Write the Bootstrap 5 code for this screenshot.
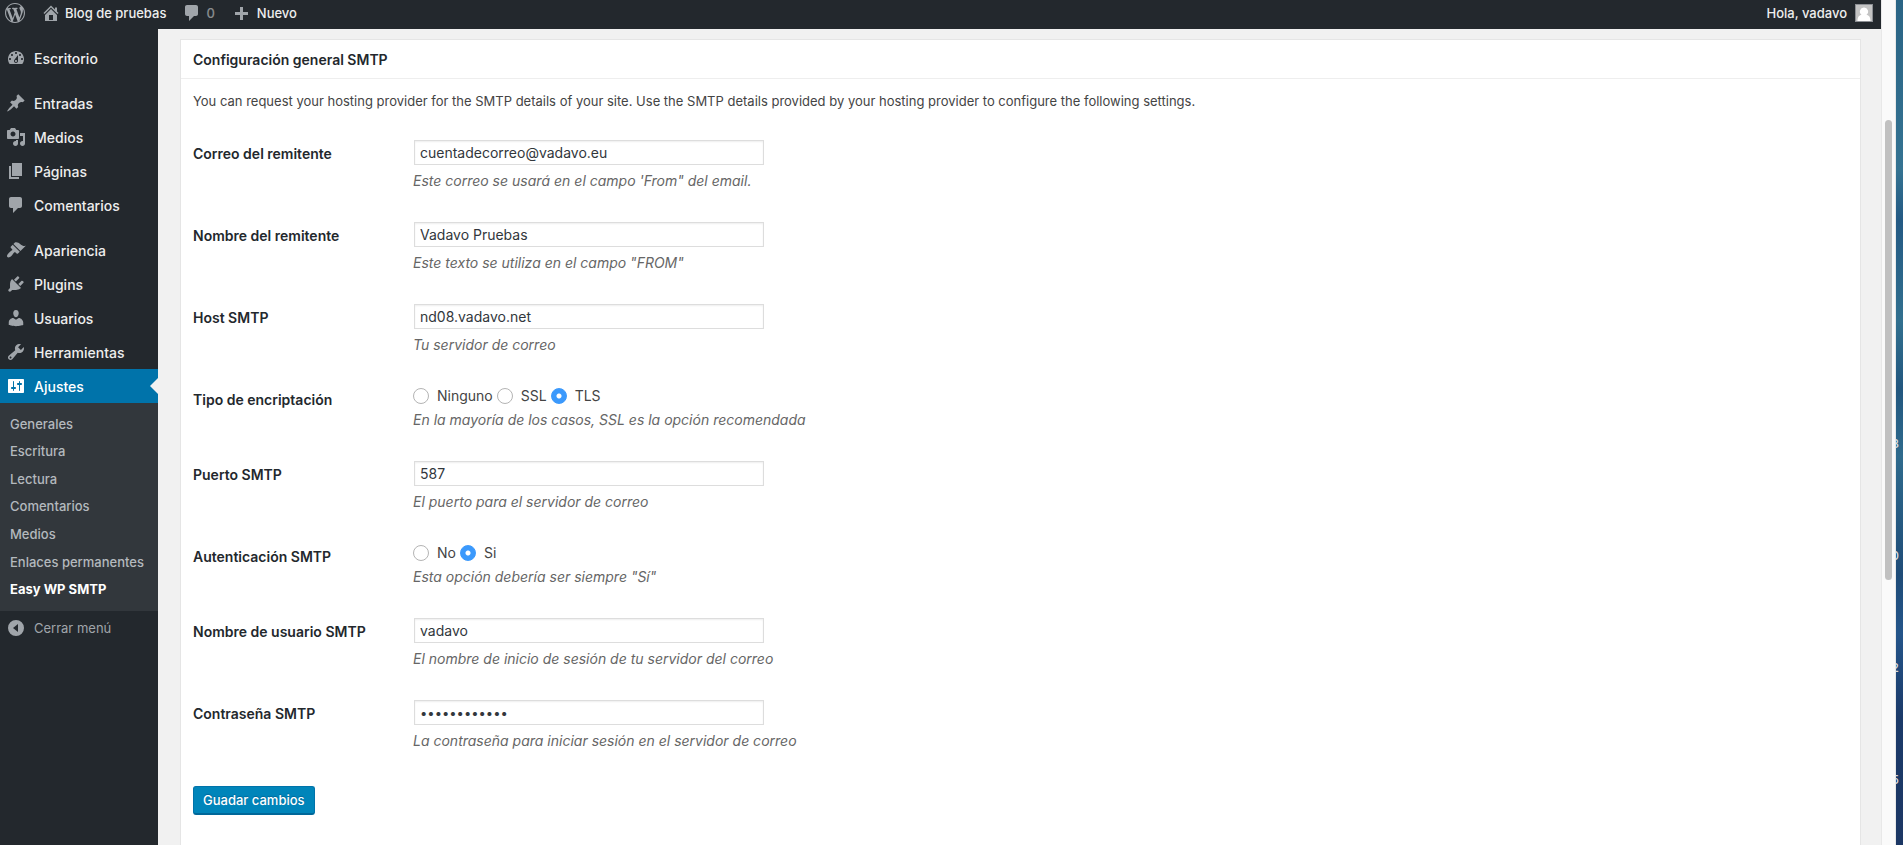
<!DOCTYPE html>
<html lang="es">
<head>
<meta charset="utf-8">
<meta name="viewport" content="width=device-width, initial-scale=1">
<title>Easy WP SMTP ‹ Blog de pruebas — WordPress</title>
<link href="https://cdn.jsdelivr.net/npm/bootstrap@5.3.0/dist/css/bootstrap.min.css" rel="stylesheet">
<style>
  :root { --wp-dark: #23282d; --wp-sub: #32373c; --wp-blue: #0073aa; --wp-grey: #f1f1f1; --wp-icon: #a0a5aa; }
  body { font-family: Inter, "Liberation Sans", sans-serif; font-size: 13px; line-height: 20px; color: #444; background: var(--wp-grey); }
  a { text-decoration: none; }
  .screen { height: 100vh; }
  .dashicon { width: 20px; height: 20px; fill: var(--wp-icon); flex: none; }

  .adminbar { height: 29px; padding: 0 8px 3px 5px; background: var(--wp-dark); font-weight: 500; }
  .adminbar a { color: #eee; }
  .adminbar .new-link { gap: 6px; }
  .avatar { width: 18px; height: 18px; }

  .sidemenu { width: 158px; padding-top: 12px; background: var(--wp-dark); font-size: 14px; font-weight: 500; }
  .menu-row { height: 34px; padding: 2px 0 0 6px; gap: 8px; color: #eee; }
  .menu-row .dashicon { margin-bottom: 2px; }
  .menu-gap { margin-top: 11px; }
  .menu-row.current { background: var(--wp-blue); color: #fff; position: relative; }
  .menu-row.current .dashicon { fill: #fff; }
  .menu-row.current::after { content: ""; position: absolute; right: 0; top: 9px; border: 8px solid transparent; border-right-color: var(--wp-grey); border-left: 0; }
  .submenu { display: grid; grid-auto-rows: 1fr; height: 208px; padding: 7px 10px 8px; background: var(--wp-sub); font-size: 13px; }
  .submenu a { color: #b4b9be; }
  .submenu a.current { color: #fff; font-weight: 700; }
  .menu-row.collapse-row { padding-top: 0; color: #a0a5aa; font-size: 13px; font-weight: 400; }
  .menu-row.collapse-row .dashicon { margin: 0; }

  .workspace { padding: 10px 20px 0 22px; }
  .postbox { background: #fff; border: 1px solid #e5e5e5; border-bottom: 0; }
  .postbox h1 { font-size: 14px; line-height: 20px; font-weight: 600; color: #23282d; padding: 10px 12px 8px; border-bottom: 1px solid #eee; }
  .inside { padding: 12px 12px 0; }
  .intro { margin-bottom: 14px; }
  .field { padding: 15px 0; }
  .field-name { width: 220px; padding-top: 5px; font-size: 14px; line-height: 18px; font-weight: 600; color: #23282d; }
  .field-body { font-size: 14px; }
  .field .form-control { width: 350px; height: 25px; margin-left: 1px; padding: 0 5px; font-size: 14px; line-height: 20px; border: 1px solid #ddd; border-radius: 0; color: #32373c; box-shadow: inset 0 1px 2px rgba(0,0,0,.07); }
  .field .form-control[type="password"] { font-size: 13px; }
  .hint { margin: 5px 0 0; padding-bottom: 1px; line-height: 21px; font-style: italic; color: #666; }
  .choices { gap: 4px; height: 20px; }
  .choices + .hint { margin-top: 3px; }
  .choices label { padding-left: 4px; }
  .choices .form-check-input { width: 16px; height: 16px; margin: 0; border-color: #b4b4b4; }
  .choices .form-check-input:checked { background: radial-gradient(circle, #fff 0 2px, #3b99fc 3px); border-color: #3b99fc; }
  .save { margin-top: 19px; height: 29px; padding: 0 9px; font-size: 13px; font-weight: 500; line-height: 20px; color: #fff; background: #0085ba; border: 1px solid #0073aa; border-bottom: 2px solid #006799; border-radius: 3px; text-shadow: 0 -1px 1px #006799; }

  .scroll-track { width: 15px; background: #fafafa; border: solid #e8e8e8; border-width: 0 1px; padding: 120px 3px 0; }
  .scroll-thumb { height: 460px; border-radius: 4px; background: #c1c1c1; }
  .wallpaper { width: 7px; padding-top: 434px; font-size: 12px; font-weight: 500; color: #ddd; background: linear-gradient(#2a6485, #357392 20%, #245a84 26%, #32708f 38%, #22577f 46%, #2f6b8d 54%, #1f4c78 68%, #24558a 75%, #1b3a69 85%, #1c3764); }
  .wallpaper span { width: 3px; height: 20px; margin-bottom: 92px; }
</style>
</head>
<body>
<div class="screen d-flex overflow-hidden">
  <div class="d-flex flex-column flex-grow-1">
    <header class="adminbar d-flex align-items-center flex-shrink-0">
      <a href="#" class="d-flex" aria-label="WordPress"><svg class="dashicon" viewBox="0 0 20 20"><path d="M20 10c0-5.51-4.49-10-10-10C4.48 0 0 4.49 0 10c0 5.52 4.48 10 10 10 5.51 0 10-4.48 10-10zM7.78 15.37L4.37 6.22c.55-.02 1.17-.08 1.17-.08.5-.06.44-1.13-.06-1.11 0 0-1.45.11-2.37.11-.18 0-.37 0-.58-.01C4.12 2.69 6.87 1.11 10 1.11c2.33 0 4.45.87 6.05 2.34-.68-.11-1.65.39-1.65 1.58 0 .74.45 1.36.9 2.1.35.61.55 1.36.55 2.46 0 1.49-1.4 5-1.4 5l-3.03-8.37c.54-.02.82-.17.82-.17.5-.05.44-1.25-.06-1.22 0 0-1.44.12-2.38.12-.87 0-2.33-.12-2.33-.12-.5-.03-.56 1.2-.06 1.22l.92.08 1.26 3.41zM17.41 10c.24-.64.74-1.87.43-4.25.7 1.29 1.05 2.71 1.05 4.25 0 3.29-1.73 6.24-4.4 7.78.97-2.59 1.94-5.2 2.92-7.78zM6.1 18.09C3.12 16.65 1.11 13.53 1.11 10c0-1.3.23-2.48.72-3.59C3.25 10.3 4.67 14.2 6.1 18.09zm4.03-6.63l2.58 6.98c-.86.29-1.76.45-2.71.45-.79 0-1.57-.11-2.29-.33.81-2.38 1.62-4.74 2.42-7.1z"/></svg></a>
      <a href="#" class="d-flex align-items-center ms-3 gap-1"><svg class="dashicon" viewBox="0 0 20 20"><path d="M16 8.5l1.53 1.53-1.06 1.06L10 4.6l-6.47 6.49-1.06-1.06L10 2.5l4 4v-2h2v4zm-6-2.46l6 5.99V18H4v-5.97zM12 17v-5H8v5h4z"/></svg>Blog de pruebas</a>
      <a href="#" class="d-flex align-items-center ms-3 gap-1"><svg class="dashicon" viewBox="0 0 20 20"><path d="M5 2h9c1.1 0 2 .9 2 2v7c0 1.1-.9 2-2 2h-2l-5 5v-5H5c-1.1 0-2-.9-2-2V4c0-1.1.9-2 2-2z"/></svg><span class="opacity-50">0</span></a>
      <a href="#" class="new-link d-flex align-items-center ms-3"><svg class="dashicon" viewBox="0 0 20 20"><path d="M17 9v3h-5v5H9v-5H4V9h5V4h3v5h5z"/></svg>Nuevo</a>
      <a href="#" class="d-flex align-items-center ms-auto">Hola, vadavo<svg class="avatar ms-2" viewBox="0 0 18 18"><path fill="#8c8f94" d="M0 0h18v18H0z"/><path fill="#c4c4c4" d="M1 1h16v16H1z"/><path fill="#fff" d="M9 3.500a4 4 0 0 1 2.500 7.200c2.500.6 4 2.300 4 6.300h-13c0-4 1.500-5.700 4-6.300A4 4 0 0 1 9 3.500z"/></svg></a>
    </header>
    <div class="d-flex flex-grow-1">
      <nav class="sidemenu flex-shrink-0" aria-label="Menú principal">
        <a href="#" class="menu-row d-flex align-items-center"><svg class="dashicon" viewBox="0 0 20 20"><path d="M3.76 16h12.480c1.100-1.370 1.760-3.110 1.760-5 0-4.420-3.580-8-8-8s-8 3.580-8 8c0 1.890.66 3.630 1.760 5zM10 4c.55 0 1 .45 1 1s-.45 1-1 1-1-.45-1-1 .45-1 1-1zM6 6c.55 0 1 .45 1 1s-.45 1-1 1-1-.45-1-1 .45-1 1-1zm8 0c.55 0 1 .45 1 1s-.45 1-1 1-1-.45-1-1 .45-1 1-1zm-5.370 5.550L12 7v6c0 1.100-.9 2-2 2s-2-.9-2-2c0-.57.24-1.080.63-1.450zM4 10c.55 0 1 .45 1 1s-.45 1-1 1-1-.45-1-1 .45-1 1-1zm12 0c.55 0 1 .45 1 1s-.45 1-1 1-1-.45-1-1 .45-1 1-1zm-5 3c0-.55-.45-1-1-1s-1 .45-1 1 .45 1 1 1 1-.45 1-1z"/></svg>Escritorio</a>
        <a href="#" class="menu-row menu-gap d-flex align-items-center"><svg class="dashicon" viewBox="0 0 20 20"><path d="M10.440 3.020l1.820-1.820 6.360 6.350-1.830 1.820c-1.050-.68-2.480-.57-3.410.36l-.75.75c-.92.93-1.040 2.350-.35 3.410l-1.830 1.820-2.410-2.410-2.800 2.790c-.42.42-3.380 2.710-3.800 2.290s1.860-3.390 2.280-3.810l2.790-2.790L4.100 9.360l1.830-1.820c1.050.69 2.480.57 3.400-.36l.75-.75c.93-.92 1.050-2.350.36-3.410z"/></svg>Entradas</a>
        <a href="#" class="menu-row d-flex align-items-center"><svg class="dashicon" viewBox="0 0 20 20"><path d="M13 11V4c0-.55-.45-1-1-1h-1.670L9 1H5L3.670 3H2c-.55 0-1 .45-1 1v7c0 .55.45 1 1 1h10c.55 0 1-.45 1-1zM7 4.500c1.380 0 2.500 1.120 2.500 2.500S8.380 9.500 7 9.500 4.500 8.380 4.500 7 5.620 4.500 7 4.500zM14 6h5v10.500c0 1.380-1.120 2.500-2.500 2.500S14 17.880 14 16.500s1.120-2.500 2.500-2.500c.17 0 .34.02.5.05V9h-3V6zm-4 8.050V13h2v3.500c0 1.380-1.120 2.500-2.500 2.500S7 17.880 7 16.500 8.120 14 9.500 14c.17 0 .34.02.5.05z"/></svg>Medios</a>
        <a href="#" class="menu-row d-flex align-items-center"><svg class="dashicon" viewBox="0 0 20 20"><path d="M6 15V2h10v13H6zm-1 1h8v2H3V5h2v11z"/></svg>Páginas</a>
        <a href="#" class="menu-row d-flex align-items-center"><svg class="dashicon" viewBox="0 0 20 20"><path d="M5 2h9c1.100 0 2 .9 2 2v7c0 1.100-.9 2-2 2h-2l-5 5v-5H5c-1.100 0-2-.9-2-2V4c0-1.100.9-2 2-2z"/></svg>Comentarios</a>
        <a href="#" class="menu-row menu-gap d-flex align-items-center"><svg class="dashicon" viewBox="0 0 20 20"><path d="M14.480 11.060L7.410 3.990l1.500-1.500c.5-.56 2.300-.47 3.510.32 1.210.8 1.430 1.280 2.910 2.100 1.180.64 2.450 1.260 4.450.85zm-.71.71L6.700 4.700 4.930 6.470c-.39.39-.39 1.020 0 1.410l1.060 1.060c.39.39.39 1.030 0 1.420-.6.6-1.430 1.110-2.210 1.690-.35.26-.7.53-1.010.84C1.430 14.230.4 16.080 1.400 17.070c.99 1 2.840-.03 4.180-1.360.31-.31.58-.66.85-1.020.57-.78 1.080-1.610 1.690-2.210.39-.39 1.020-.39 1.410 0l1.060 1.060c.39.39 1.020.39 1.410 0z"/></svg>Apariencia</a>
        <a href="#" class="menu-row d-flex align-items-center"><svg class="dashicon" viewBox="0 0 20 20"><path d="M13.110 4.360L9.870 7.600 8 5.730l3.240-3.240c.35-.34 1.050-.2 1.560.32.52.51.66 1.210.31 1.550zm-8 1.770l.91-1.120 9.010 9.010-1.190.84c-.71.71-2.630 1.160-3.820 1.160H6.140L4.900 17.260c-.59.59-1.540.59-2.120 0-.59-.58-.59-1.530 0-2.120l1.240-1.240v-3.880c0-1.130.4-3.190 1.090-3.890zm7.260 3.970l3.240-3.240c.34-.35 1.040-.21 1.550.31.52.51.66 1.210.31 1.550l-3.240 3.250z"/></svg>Plugins</a>
        <a href="#" class="menu-row d-flex align-items-center"><svg class="dashicon" viewBox="0 0 20 20"><path d="M10 9.250c-2.270 0-2.730-3.440-2.730-3.440C7 4.020 7.820 2 9.970 2c2.160 0 2.980 2.020 2.710 3.810 0 0-.41 3.440-2.680 3.440zm0 2.570L12.720 10c2.390 0 4.520 2.330 4.520 4.530v2.490s-3.650 1.130-7.240 1.130c-3.650 0-7.240-1.130-7.240-1.130v-2.490c0-2.250 1.940-4.480 4.470-4.480z"/></svg>Usuarios</a>
        <a href="#" class="menu-row d-flex align-items-center"><svg class="dashicon" viewBox="0 0 20 20"><path d="M16.680 9.770c-1.340 1.340-3.300 1.670-4.950.99l-5.410 6.520c-.99.99-2.590.99-3.580 0s-.99-2.590 0-3.570l6.520-5.420c-.68-1.650-.35-3.610.99-4.950 1.280-1.280 3.120-1.620 4.720-1.060l-2.890 2.890 2.820 2.820 2.860-2.870c.53 1.580.18 3.390-1.080 4.650zM3.810 16.210c.4.39 1.040.39 1.430 0 .4-.4.4-1.040 0-1.430-.39-.4-1.030-.4-1.430 0-.39.39-.39 1.030 0 1.430z"/></svg>Herramientas</a>
        <a href="#" class="menu-row current d-flex align-items-center" aria-current="true"><svg class="dashicon" viewBox="0 0 20 20"><path d="M18 16V4c0-.55-.45-1-1-1H3c-.55 0-1 .45-1 1v12c0 .55.45 1 1 1h14c.55 0 1-.45 1-1zM8 11h1c.55 0 1 .45 1 1s-.45 1-1 1H8v1.500c0 .28-.22.5-.5.5s-.5-.22-.5-.5V13H6c-.55 0-1-.45-1-1s.45-1 1-1h1V5.500c0-.28.22-.5.5-.5s.5.22.5.5V11zm5-2h-1c-.55 0-1-.45-1-1s.45-1 1-1h1V5.500c0-.28.22-.5.5-.5s.5.22.5.5V7h1c.55 0 1 .45 1 1s-.45 1-1 1h-1v5.500c0 .28-.22.5-.5.5s-.5-.22-.5-.5V9z"/></svg>Ajustes</a>
        <div class="submenu align-items-center">
          <a href="#">Generales</a>
          <a href="#">Escritura</a>
          <a href="#">Lectura</a>
          <a href="#">Comentarios</a>
          <a href="#">Medios</a>
          <a href="#">Enlaces permanentes</a>
          <a href="#" class="current" aria-current="page">Easy WP SMTP</a>
        </div>
        <button type="button" class="menu-row collapse-row d-flex align-items-center w-100 border-0 bg-transparent"><svg class="dashicon" viewBox="0 0 20 20"><path fill-rule="evenodd" d="M10 2a8 8 0 1 1 0 16 8 8 0 0 1 0-16zm2 4l-5 4 5 4z"/></svg>Cerrar menú</button>
      </nav>
      <main class="workspace d-flex flex-grow-1">
        <section class="postbox flex-grow-1">
          <h1 class="m-0">Configuración general SMTP</h1>
          <form class="inside">
            <p class="intro">You can request your hosting provider for the SMTP details of your site. Use the SMTP details provided by your hosting provider to configure the following settings.</p>
            <div class="field d-flex">
              <label class="field-name" for="from-email">Correo del remitente</label>
              <div class="field-body"><input class="form-control" id="from-email" type="text" value="cuentadecorreo@vadavo.eu"><p class="hint">Este correo se usará en el campo 'From" del email.</p></div>
            </div>
            <div class="field d-flex">
              <label class="field-name" for="from-name">Nombre del remitente</label>
              <div class="field-body"><input class="form-control" id="from-name" type="text" value="Vadavo Pruebas"><p class="hint">Este texto se utiliza en el campo "FROM"</p></div>
            </div>
            <div class="field d-flex">
              <label class="field-name" for="host">Host SMTP</label>
              <div class="field-body"><input class="form-control" id="host" type="text" value="nd08.vadavo.net"><p class="hint">Tu servidor de correo</p></div>
            </div>
            <div class="field d-flex" role="radiogroup" aria-labelledby="enc-name">
              <div class="field-name" id="enc-name">Tipo de encriptación</div>
              <div class="field-body">
                <div class="choices d-flex align-items-center">
                  <input class="form-check-input" type="radio" name="enc" id="enc-none"><label for="enc-none">Ninguno</label>
                  <input class="form-check-input" type="radio" name="enc" id="enc-ssl"><label for="enc-ssl">SSL</label>
                  <input class="form-check-input" type="radio" name="enc" id="enc-tls" checked><label for="enc-tls">TLS</label>
                </div>
                <p class="hint">En la mayoría de los casos, SSL es la opción recomendada</p>
              </div>
            </div>
            <div class="field d-flex">
              <label class="field-name" for="port">Puerto SMTP</label>
              <div class="field-body"><input class="form-control" id="port" type="text" value="587"><p class="hint">El puerto para el servidor de correo</p></div>
            </div>
            <div class="field d-flex" role="radiogroup" aria-labelledby="auth-name">
              <div class="field-name" id="auth-name">Autenticación SMTP</div>
              <div class="field-body">
                <div class="choices d-flex align-items-center">
                  <input class="form-check-input" type="radio" name="auth" id="auth-no"><label for="auth-no">No</label>
                  <input class="form-check-input" type="radio" name="auth" id="auth-yes" checked><label for="auth-yes">Si</label>
                </div>
                <p class="hint">Esta opción debería ser siempre "Sí"</p>
              </div>
            </div>
            <div class="field d-flex">
              <label class="field-name" for="user">Nombre de usuario SMTP</label>
              <div class="field-body"><input class="form-control" id="user" type="text" value="vadavo"><p class="hint">El nombre de inicio de sesión de tu servidor del correo</p></div>
            </div>
            <div class="field d-flex">
              <label class="field-name" for="pass">Contraseña SMTP</label>
              <div class="field-body"><input class="form-control" id="pass" type="password" value="contrasena12"><p class="hint">La contraseña para iniciar sesión en el servidor de correo</p></div>
            </div>
            <button type="submit" class="btn save">Guadar cambios</button>
          </form>
        </section>
      </main>
    </div>
  </div>
  <div class="scroll-track flex-shrink-0"><div class="scroll-thumb"></div></div>
  <div class="wallpaper flex-shrink-0 overflow-hidden">
    <span class="d-flex justify-content-end overflow-hidden">3</span>
    <span class="d-flex justify-content-end overflow-hidden">0</span>
    <span class="d-flex justify-content-end overflow-hidden">2</span>
    <span class="d-flex justify-content-end overflow-hidden">5</span>
  </div>
</div>
<script src="https://cdn.jsdelivr.net/npm/bootstrap@5.3.0/dist/js/bootstrap.bundle.min.js"></script>
</body>
</html>
